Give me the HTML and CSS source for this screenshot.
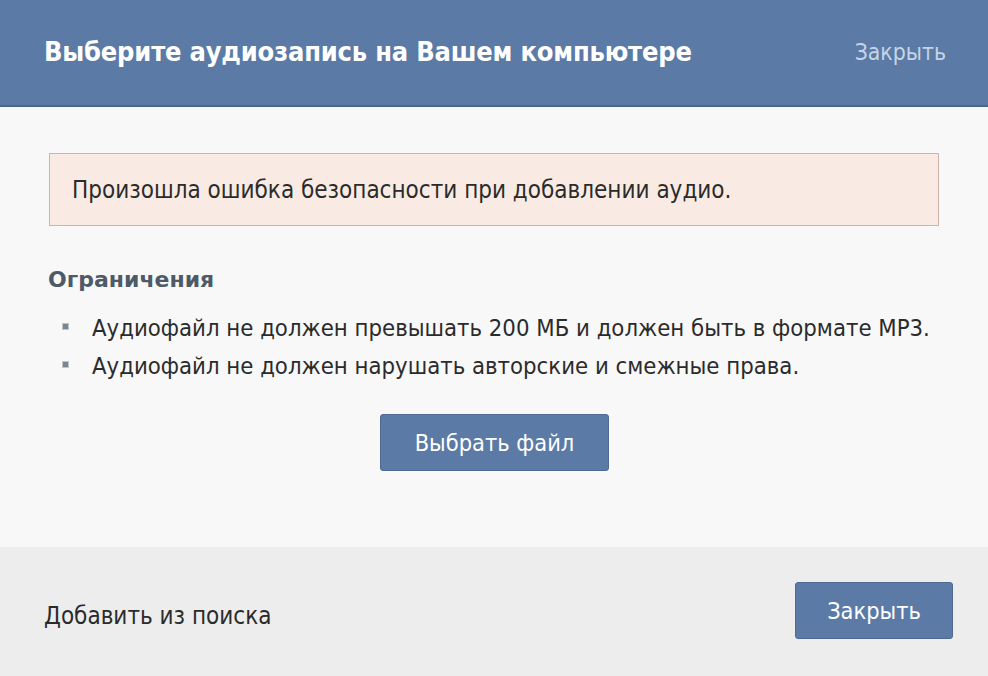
FILE: index.html
```html
<!DOCTYPE html>
<html lang="ru">
<head>
<meta charset="utf-8">
<link rel="stylesheet" href="styles.css">
</head>
<body>
<div class="box">
  <div class="header">
    <div class="title">Выберите аудиозапись на Вашем компьютере</div>
    <div class="close-link">Закрыть</div>
  </div>
  <div class="content">
    <div class="error">Произошла ошибка безопасности при добавлении аудио.</div>
    <div class="limits-title">Ограничения</div>
    <ul class="limits">
      <li>Аудиофайл не должен превышать 200 МБ и должен быть в формате MP3.</li>
      <li>Аудиофайл не должен нарушать авторские и смежные права.</li>
    </ul>
    <div class="center">
      <div class="btn btn-choose">Выбрать файл</div>
    </div>
  </div>
  <div class="footer">
    <div class="search-link">Добавить из поиска</div>
    <div class="btn btn-close">Закрыть</div>
  </div>
</div>
</body>
</html>
```
FILE: styles.css
```css
html, body {
  margin: 0;
  padding: 0;
  background: #f8f8f8;
}
.box {
  width: 988px;
  height: 676px;
  display: flex;
  flex-direction: column;
  font-family: "DejaVu Sans", sans-serif;
  overflow: hidden;
}
.header {
  height: 107px;
  background: #5b7aa5;
  border-bottom: 2px solid #4d6589;
  display: flex;
  align-items: center;
  justify-content: space-between;
  padding: 0 42px 0 44px;
  box-sizing: border-box;
  flex: none;
}
.title {
  color: #ffffff;
  font-family: "DejaVu Sans Condensed", "DejaVu Sans", sans-serif;
  font-weight: bold;
  font-size: 27px;
  letter-spacing: -0.2px;
  margin-top: -2px;
}
.close-link {
  color: #c5d4e8;
  font-family: "DejaVu Sans Condensed", "DejaVu Sans", sans-serif;
  font-size: 22.8px;
  margin-top: -2px;
}
.content {
  flex: 1;
  padding: 46px 49px 0 49px;
  background: #f8f8f8;
}
.error {
  height: 73px;
  box-sizing: border-box;
  border: 1px solid #cdb3a9;
  background: #f9ebe4;
  color: #2b2b2b;
  font-family: "DejaVu Sans Condensed", "DejaVu Sans", sans-serif;
  font-size: 24px;
  display: flex;
  align-items: center;
  padding-left: 22px;
}
.limits-title {
  margin-top: 41px;
  color: #4d5a68;
  font-weight: bold;
  font-size: 22px;
  line-height: 26px;
  margin-left: -1px;
}
.limits {
  list-style: none;
  margin: 16px 0 0 0;
  padding: 0;
}
.limits li {
  position: relative;
  padding-left: 43px;
  color: #2b2b2b;
  font-family: "DejaVu Sans Condensed", "DejaVu Sans", sans-serif;
  font-size: 23.7px;
  line-height: 38px;
}
.limits li::before {
  content: "";
  position: absolute;
  left: 13px;
  top: 14px;
  width: 7px;
  height: 7px;
  background: #7a8591;
  border: 1px solid #bcc4cc;
  box-sizing: border-box;
}
.center {
  display: flex;
  justify-content: center;
  margin-top: 29px;
}
.btn {
  background: #5b7aa5;
  border: 1px solid #4e6a93;
  border-radius: 3px;
  color: #ffffff;
  font-family: "DejaVu Sans Condensed", "DejaVu Sans", sans-serif;
  font-size: 23.4px;
  display: flex;
  align-items: center;
  justify-content: center;
  box-sizing: border-box;
}
.btn-choose {
  width: 229px;
  height: 57px;
  margin-left: 1px;
}
.footer {
  height: 129px;
  flex: none;
  background: #ededed;
  display: flex;
  align-items: center;
  justify-content: space-between;
  padding: 0 35px 0 44px;
  box-sizing: border-box;
}
.search-link {
  color: #2b2b2b;
  font-family: "DejaVu Sans Condensed", "DejaVu Sans", sans-serif;
  font-size: 24px;
  margin-top: 8px;
}
.btn-close {
  width: 158px;
  height: 57px;
  margin-top: -2px;
}
```
